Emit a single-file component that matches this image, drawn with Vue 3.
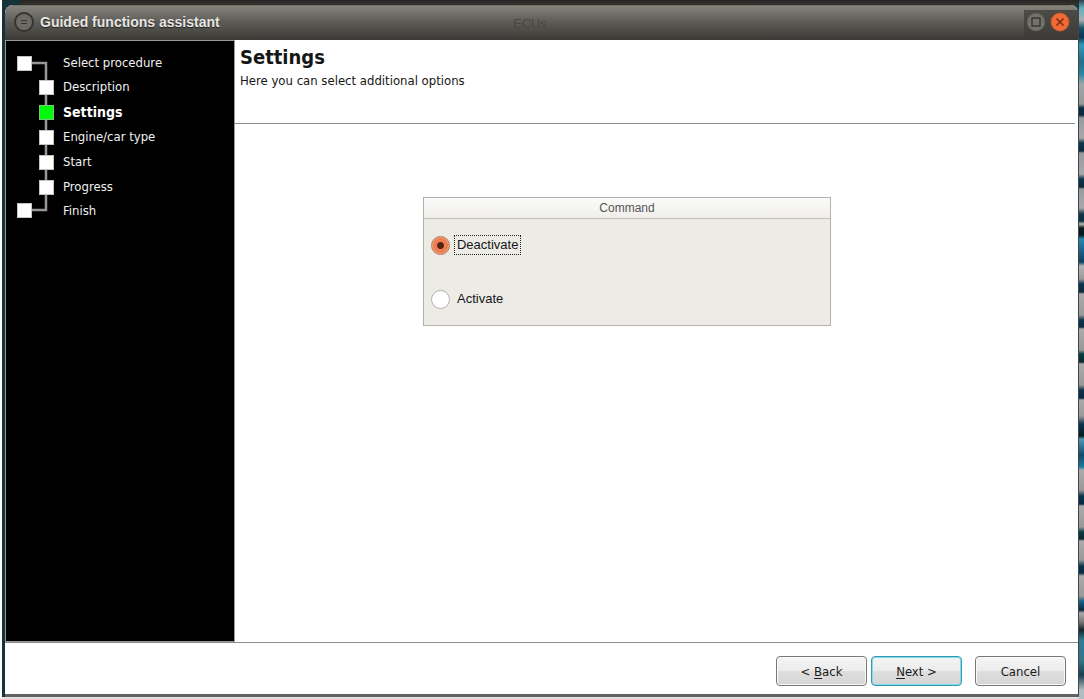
<script setup>
import { ref } from 'vue'

const steps = ['Select procedure', 'Description', 'Settings', 'Engine/car type', 'Start', 'Progress', 'Finish']
const current = 2
const nodes = steps.map((_, i) => ({
  x: i === 0 || i === steps.length - 1 ? 1 : 23,
  y: [6, 30, 55, 80, 105, 130, 153][i],
  active: i === current,
}))
const command = ref('deactivate')
</script>

<template>
  <div class="desktop">
    <div class="window">
      <header class="titlebar">
        <button class="round menu" aria-label="Window menu">
          <svg width="20" height="20" viewBox="0 0 20 20">
            <circle cx="10" cy="10" r="9" fill="#6d6b65" stroke="#35342f" stroke-width="2" />
            <path d="M7 8.5h6M7 11.5h6" stroke="#35342f" stroke-width="1.2" />
          </svg>
        </button>
        <h1>Guided functions assistant</h1>
        <span class="ghost">ECUs</span>
        <div class="controls">
          <button class="round" aria-label="Maximize">
            <svg width="20" height="20" viewBox="0 0 20 20">
              <circle cx="10" cy="10" r="9" fill="#73716b" stroke="#5b5953" />
              <rect x="6" y="6" width="8" height="8" fill="none" stroke="#2c2b27" stroke-width="1.2" />
            </svg>
          </button>
          <button class="round" aria-label="Close">
            <svg width="20" height="20" viewBox="0 0 20 20">
              <circle cx="10" cy="10" r="9" fill="#ee6a36" stroke="#c9562b" />
              <path d="M6.500 6.500l7 7M13.500 6.500l-7 7" stroke="#7f2c12" stroke-width="1.6" />
            </svg>
          </button>
        </div>
      </header>

      <div class="body">
        <nav class="sidebar" aria-label="Steps">
          <svg class="tree" width="40" height="174" viewBox="0 0 40 174">
            <path d="M8 13H30V160H8" fill="none" stroke="#969696" stroke-width="2.5" />
            <rect
              v-for="(n, i) in nodes" :key="i" :x="n.x + 0.5" :y="n.y + 0.5" width="14" height="14"
              :fill="n.active ? '#00fa0c' : '#ffffff'" :stroke="n.active ? '#75c878' : '#c4c4c4'"
            />
          </svg>
          <ol class="steps">
            <li v-for="(s, i) in steps" :key="s" :class="{ active: i === current }">{{ s }}</li>
          </ol>
        </nav>

        <main class="page">
          <div class="page-head">
            <h2>Settings</h2>
            <p>Here you can select additional options</p>
          </div>
          <fieldset class="group" aria-labelledby="group-title">
            <div id="group-title" class="group-title">Command</div>
            <div class="options">
              <label class="option">
                <input v-model="command" type="radio" name="command" value="deactivate">
                <span class="caption">Deactivate</span>
              </label>
              <label class="option">
                <input v-model="command" type="radio" name="command" value="activate">
                <span class="caption">Activate</span>
              </label>
            </div>
          </fieldset>
        </main>
      </div>

      <footer class="footer">
        <button class="btn">&lt; <u>B</u>ack</button>
        <button class="btn primary"><u>N</u>ext &gt;</button>
        <button class="btn cancel">Cancel</button>
      </footer>
    </div>
    <div class="wallpaper"></div>
  </div>
</template>

<style>
body {
  margin: 0;
}
</style>

<style scoped>
* {
  box-sizing: border-box;
}
.desktop {
  display: flex;
  min-height: 100vh;
  padding: 5px 0 2px 2px;
  background:
    linear-gradient(90deg, #fff 2px, transparent 2px),
    linear-gradient(#252523, #34332f) 20px 0 / 100% 5px no-repeat,
    linear-gradient(#e0e0e0, #e0e0e0) 0 100% / 100% 2px no-repeat,
    #17333a;
  font-family: "DejaVu Sans Condensed", "DejaVu Sans", sans-serif;
  font-size: 13px;
  color: #161616;
}
.window {
  flex: 1;
  display: flex;
  flex-direction: column;
  margin-left: 3px;
  border-right: 1px solid #454545;
  border-bottom: 3px solid #626262;
  border-radius: 8px 8px 0 0;
  background: #fff;
}
.wallpaper {
  width: 5px;
  margin: -5px 0 -2px;
  background: linear-gradient(
    #26414a 0, #62aebe 8px, #a3b0b3 20px, #175069 28px, #0a3650 37px, #2c9abc 45px,
    #236f89 62px, #29879f 74px, #9aa8aa 84px, #999 104px, #072b45 108px, #082b44 115px,
    #989b9d 118px, #a6a8aa 138px, #0c3650 143px, #082a40 151px, #989b9d 153px, #a6a8aa 174px,
    #0c3650 179px, #082a40 187px, #989b9d 189px, #a6a8aa 208px, #0c3650 214px, #0b2d42 221px,
    #b6b9b3 224px, #071a20 228px, #071a20 235px, #2688b5 239px, #0e4160 262px, #b1b5b7 266px,
    #999 279px, #083450 284px, #082a40 292px, #aaa 294px, #999 315px, #083450 320px,
    #082a40 327px, #aaa 329px, #999 350px, #083b45 354px, #082a30 362px, #aaa 364px,
    #999 385px, #083450 390px, #082a40 398px, #aaa 400px, #999 416px, #083450 424px,
    #071a20 436px, #4b9ab5 439px, #104b69 455px, #167da0 467px, #aaa 470px, #999 490px,
    #083450 496px, #082a40 504px, #aaa 506px, #999 527px, #083b45 532px, #082a30 539px,
    #aaa 541px, #999 560px, #083450 566px, #082a40 573px, #aaa 576px, #999 596px,
    #156489 601px, #082a40 610px, #aaa 613px, #777 622px, #14262b 630px, #2c7d93 640px,
    #35758a 660px, #173f50 675px, #aebdc1 690px
  );
}
.titlebar {
  position: relative;
  display: flex;
  align-items: center;
  height: 35px;
  padding: 0 0 3px 9px;
  border-top: 1px solid #716f6a;
  border-radius: 8px 8px 0 0;
  background: linear-gradient(#85837c, #5f5d57 45%, #3b3a36);
}
.titlebar h1 {
  margin: 0 0 0 6px;
  font: bold 14px/20px "Liberation Sans", Arial, sans-serif;
  color: #e8e6e2;
  text-shadow: 0 1px 1px #222;
}
.ghost {
  position: absolute;
  left: 508px;
  top: 10px;
  font: 13px/16px "Liberation Sans", Arial, sans-serif;
  color: #484741;
}
.round {
  display: block;
  width: 20px;
  height: 20px;
  padding: 0;
  border: 0;
  background: none;
}
.round svg {
  display: block;
}
.controls {
  display: flex;
  gap: 4px;
  align-self: flex-end;
  align-items: flex-start;
  height: 30px;
  margin: 0 0 -3px auto;
  padding: 2px 8px 0 2px;
  background: linear-gradient(#4d4b46, #3b3a36);
}
.body {
  flex: 1;
  display: flex;
  border-bottom: 1px solid #8c8c8c;
}
.sidebar {
  display: flex;
  width: 230px;
  padding: 10px 0 0 10px;
  border: 1px solid #999;
  background: #000;
}
.tree {
  flex: none;
  margin-top: -1px;
}
.steps {
  margin: 0;
  padding: 0 0 0 7px;
  list-style: none;
  color: #f0f0f0;
}
.steps li {
  height: 25px;
  line-height: 24px;
  white-space: nowrap;
}
.steps li:first-child,
.steps li:nth-last-child(2) {
  height: 24px;
}
.steps .active {
  font-size: 14px;
  font-weight: bold;
  color: #fff;
}
.page {
  flex: 1;
}
.page-head {
  height: 84px;
  margin-right: 3px;
  padding: 5px 0 0 5px;
  border-bottom: 1px solid #8c8c8c;
}
.page-head h2 {
  margin: 0;
  font-size: 20px;
  line-height: 24px;
}
.page-head p {
  margin: 4px 0 0;
  line-height: 16px;
}
.group {
  width: 408px;
  margin: 73px auto 0 22.3%;
  padding: 0;
  border: 1px solid #b3b1aa;
  background: #edebe6;
  font-family: "Liberation Sans", Arial, sans-serif;
}
.group-title {
  height: 21px;
  border-bottom: 1px solid #c4c2bc;
  background: linear-gradient(#fbfbfa, #efeeeb);
  font-size: 12px;
  line-height: 21px;
  text-align: center;
  color: #565656;
}
.options {
  display: flex;
  flex-direction: column;
  gap: 34px;
  padding: 16px 7px;
}
.option {
  display: flex;
  align-items: center;
  gap: 4px;
  height: 20px;
}
.option input {
  appearance: none;
  width: 19px;
  height: 19px;
  margin: 0;
  border: 1px solid #b4b0ab;
  border-radius: 50%;
  background: #fff;
}
.option input:checked {
  border-color: #b97557;
  background: radial-gradient(circle, #572315 3px, #ef8257 4px, #e87c50 7px, #f3a27f 8px);
}
.caption {
  padding: 0 2px;
  border: 1px dotted transparent;
  line-height: 18px;
}
.option input:checked + .caption {
  border-color: #222;
}
.footer {
  display: flex;
  justify-content: flex-end;
  gap: 4px;
  padding: 13px 12px 8px;
}
.btn {
  width: 91px;
  height: 30px;
  padding: 0;
  border: 1px solid #777;
  border-radius: 4px;
  background: linear-gradient(#f5f5f5, #ececec 48%, #dedede 52%, #d5d5d5);
  box-shadow: inset 0 0 0 1px #fafafa;
  font-family: inherit;
  font-size: 13px;
  color: #1b1b1b;
}
.btn.primary {
  border-color: #3a98ad;
  box-shadow: inset 0 0 0 1px #7ddcf0;
}
.btn.cancel {
  margin-left: 9px;
}
.btn u {
  text-underline-offset: 2px;
}
</style>
